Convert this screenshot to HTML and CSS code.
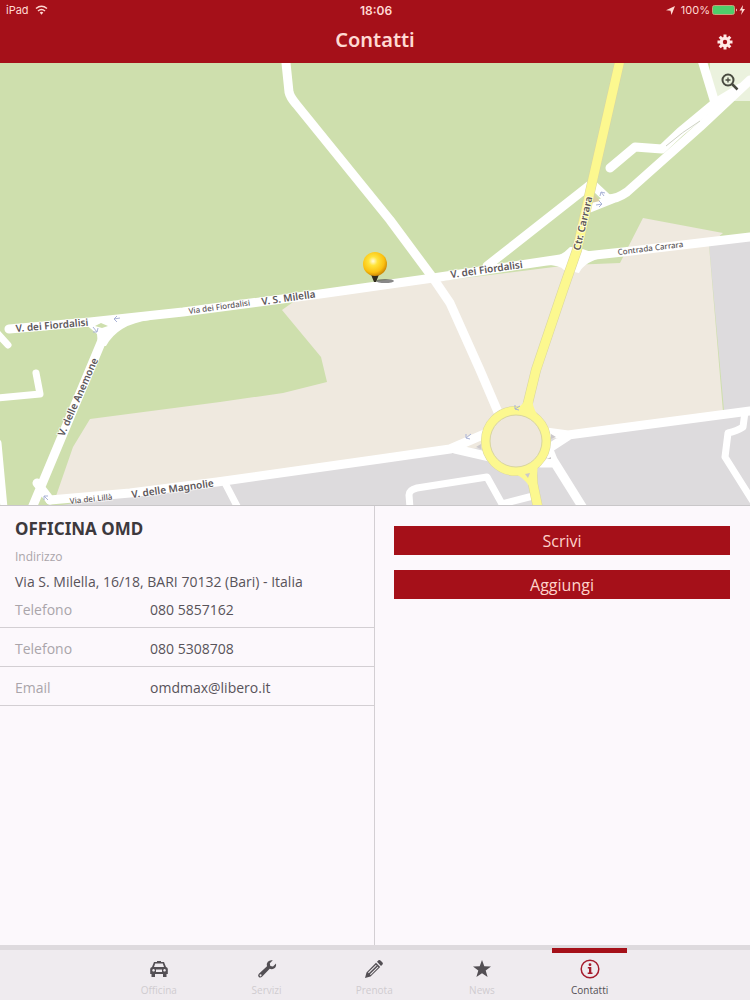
FILE: index.html
```html
<!DOCTYPE html>
<html lang="it">
<head>
  <meta charset="UTF-8" />
  <meta name="viewport" content="width=device-width, initial-scale=1.0"/>
  <title>Contatti</title>
  <link rel="stylesheet" href="styles.css">
</head>
<body>

  <header>
    <div class="stato">
      <div class="stato-sinistra">
        <span>iPad</span>
        <svg width="13" height="10" viewBox="0 0 13 10" fill="none" stroke="#ffd9d3" stroke-width="1.5">
          <path d="M1 3.5Q6.500-1 12 3.500M3 6Q6.500 3 10 6"/>
          <path d="M4.700 7.500L6.500 9.700L8.300 7.500Q6.500 6.200 4.700 7.500Z" fill="#ffd9d3" stroke="none"/>
        </svg>
      </div>
      <time class="ora">18:06</time>
      <div class="stato-destra">
        <svg width="9" height="9" viewBox="0 0 9 9"><path d="M9 0L5.500 9L4.500 4.800L0 4.200Z" fill="#ffd9d3"/></svg>
        <span class="carica">100%</span>
        <svg width="34" height="10" viewBox="0 0 34 10">
          <rect x="0.500" y="0.500" width="22" height="9" rx="2" fill="#4fce6b" stroke="#c9a07a"/>
          <path d="M24 3.500Q26 5 24 6.500Z" fill="#ffd9d3"/>
          <path d="M31 0L27.500 5.500H30L29 10L33 4H30.500Z" fill="#ffd9d3"/>
        </svg>
      </div>
    </div>
    <div class="titolo">
      <h1>Contatti</h1>
      <button class="impostazioni" aria-label="Impostazioni">
        <svg width="16" height="16" viewBox="-8 -8 16 16">
          <g stroke="#ffe9e6" stroke-width="3">
            <path d="M0-7.500V7.500M-7.500 0H7.500M-5.300-5.300L5.300 5.300M-5.300 5.300L5.300-5.300"/>
          </g>
          <circle r="5.200" fill="#ffe9e6"/>
          <circle r="2.200" fill="#a51019"/>
        </svg>
      </button>
    </div>
  </header>

  <div class="mappa">
    <svg class="carta" viewBox="0 63 750 442" role="img" aria-label="Mappa">
      <defs>
        <radialGradient id="giallo" cx="42%" cy="38%" r="62%">
          <stop offset="0" stop-color="#fffbe0"/>
          <stop offset="0.3" stop-color="#ffe43c"/>
          <stop offset="0.75" stop-color="#fbc010"/>
          <stop offset="1" stop-color="#cf8a05"/>
        </radialGradient>
      </defs>

      <!-- terreni -->
      <rect y="63" width="750" height="443" fill="#cedfad"/>
      <path d="M709 245L750 238V506H55L200 485L724 410Z" fill="#dddbdd"/>
      <path d="M282 310L300 297L440 281L570 265L620 263L643 218L723 233L709 245L723 412L565 437L447 452L200 486L55 499L73 447L90 419L220 402L283 393L327 382L321 357Z" fill="#efe9df"/>

      <!-- strade -->
      <g class="strade">
        <path d="M9 329L90 322L183 312L320 294L433 278L567 258L623 252L750 237"/>
        <path d="M286 63L289 92Q290 97 296 104L390 220L433 278L450 303L480 370L498 412"/>
        <path d="M487 266L590 185"/>
        <path d="M592 184L608 199Q617 199 627 192L700 127L750 80"/>
        <path d="M587 209L612 199"/>
        <path d="M610 168L635 147L662 149L680 132L715 103L702 60"/>
        <path d="M715 103L740 88"/>
        <path d="M50 500L130 493L217 482L380 459L450 449L487 433M455 449L490 457"/>
        <path d="M546 432L568 435L750 411M568 436L548 449"/>
        <path d="M545 440L553 460L583 508M541 463L553 463"/>
        <path d="M103 338L32 508M37 483L50 500"/>
      </g>
      <g class="strade vicoli">
        <path d="M410 508L409 495Q409 490 417 488L487 477L502 504L533 496"/>
        <path d="M745 412L743 427Q737 431 728 433L725 457L752 500"/>
        <path d="M-3 333L8 345"/>
        <path d="M-3 398L40 394L36 373"/>
        <path d="M-2 443L4 508"/>
        <path d="M225 483L238 508"/>
      </g>
      <path d="M84 323L97 334L98 346L106 346Q118 324 150 320V315Z" fill="#fff"/>
      <path d="M95 326L101 323L108 326L102 328Z" fill="#cedfad"/>
      <path d="M545 261Q562 256 570 247L579 247Q586 252 605 254V257Q585 261 579 273L564 270Q560 265 545 265Z" fill="#fff"/>
      <path d="M594 194L600 201L591 203Z" fill="#d9cfa4"/>
      <path d="M666 146Q682 132 700 121" fill="none" stroke="#ced2c4"/>

      <!-- strada provinciale e rotatoria -->
      <g class="bordo">
        <path d="M620 60L592 183L577 250L563 290L536 370L527 407"/>
        <circle cx="516" cy="441" r="30"/>
        <path d="M532 467L533 484L538 508"/>
      </g>
      <g class="provinciale">
        <path d="M620 60L592 183L577 250L563 290L536 370L527 407"/>
        <circle cx="516" cy="441" r="30"/>
        <path d="M532 467L533 484L538 508"/>
        <path d="M525 400Q522 407 512 410L541 420Q534 412 532 400ZM500 467Q522 474 530 487L536 487L538 462Z" fill="#fcf88f" stroke="none"/>
      </g>
      <circle cx="516" cy="441" r="26" fill="#eee7dc" stroke="#d8d5a0"/>
      <path d="M525 474L530 473L528 478ZM551 434L556 437L551 439ZM476 447L481 444V449ZM547 459L551 457V459Z" fill="#cbc8cb"/>

      <!-- sensi unici -->
      <g class="frecce">
        <path d="M120 318L114 319M117 316L114 319L117 322"/>
        <path d="M93 327L97 332M98 328L97 332L93 332"/>
        <path d="M48 500L44 496M48 496L44 496L44 500"/>
        <path d="M604 196L601 192M600 196L601 192L605 193"/>
        <path d="M596 205L602 204M599 201L602 204L599 207"/>
        <path d="M471 434L466 438M466 434L466 438L470 439"/>
        <path d="M520 406L515 409M515 405L515 409L519 410"/>
      </g>

      <!-- nomi delle vie -->
      <g class="vie">
        <text transform="translate(16 332) rotate(-5)">V. dei Fiordalisi</text>
        <text transform="translate(262 305) rotate(-8)">V. S. Milella</text>
        <text transform="translate(451 278) rotate(-8)">V. dei Fiordalisi</text>
        <text transform="translate(132 498) rotate(-8)">V. delle Magnolie</text>
        <text transform="translate(64 437) rotate(-66)">V. delle Anemone</text>
        <text transform="translate(580 251) rotate(-77)">Ctr. Carrara</text>
      </g>
      <g class="vie minori">
        <text transform="translate(189 314) rotate(-8)">Via dei Fiordalisi</text>
        <text transform="translate(618 255) rotate(-7)">Contrada Carrara</text>
        <text transform="translate(70 504) rotate(-6)">Via dei Lillà</text>
      </g>

      <!-- segnaposto -->
      <ellipse cx="385" cy="281" rx="9" ry="2" fill="#555" opacity="0.7"/>
      <path d="M370 272H380L376 282H374Z" fill="#2f2a1c"/>
      <circle cx="375" cy="264" r="12" fill="url(#giallo)"/>
    </svg>
    <button class="ingrandisci" aria-label="Ingrandisci">
      <svg width="18" height="18" viewBox="0 0 18 18" fill="none" stroke="#484a40">
        <circle cx="7" cy="7" r="5.500" stroke-width="2"/>
        <path d="M11 11L16.500 16.500" stroke-width="2.500"/>
        <path d="M4.500 7H9.500M7 4.500V9.500" stroke-width="1.300"/>
      </svg>
    </button>
  </div>

  <main>
    <section class="dati">
      <h2>OFFICINA OMD</h2>
      <p class="etichetta">Indirizzo</p>
      <p class="indirizzo">Via S. Milella, 16/18, BARI 70132 (Bari) - Italia</p>
      <table>
        <tr><th scope="row">Telefono</th><td>080 5857162</td></tr>
        <tr><th scope="row">Telefono</th><td>080 5308708</td></tr>
        <tr><th scope="row">Email</th><td>omdmax@libero.it</td></tr>
      </table>
    </section>
    <section class="azioni">
      <button>Scrivi</button>
      <button>Aggiungi</button>
    </section>
  </main>

  <nav>
    <a href="#officina">
      <svg width="20" height="20" viewBox="0 0 20 20">
        <path fill-rule="evenodd" d="M5 3H15L17 8Q18.800 8.500 18.800 10V15H17.500V18H14V15H6V18H2.500V15H1.200V10Q1.200 8.500 3 8ZM6.200 4.500L5 8H15L13.800 4.500ZM4.500 10A1.300 1.300 0 1 0 4.600 10ZM15.500 10A1.300 1.300 0 1 0 15.600 10ZM7 10.500V13H13V10.500Z"/>
        <path d="M8 2H12V4H8Z"/>
      </svg>
      <span>Officina</span>
    </a>
    <a href="#servizi">
      <svg width="20" height="20" viewBox="0 0 20 20">
        <path fill-rule="evenodd" d="M15.800 1.300L12.800 4.300L13.300 7L16 7.400L19 4.500Q19.600 8 17 9.500Q15 10.600 12.700 9.800L5 17.800Q3.300 19.300 1.700 17.900Q0.400 16.300 1.900 14.700L10 7.300Q9.200 4.800 10.800 2.800Q12.800 0.600 15.800 1.300ZM3.500 15.300A1 1 0 1 0 3.600 15.300Z"/>
      </svg>
      <span>Servizi</span>
    </a>
    <a href="#prenota">
      <svg width="20" height="20" viewBox="0 0 20 20">
        <path fill-rule="evenodd" d="M13 2.800L14.500 1.300Q15.500 0.500 16.500 1.500L18.500 3.500Q19.400 4.500 18.500 5.500L17 7ZM12 3.800L16.200 8L6.500 17.500L1 19L2.500 13.500ZM12 5.800L4 13.600L4.800 14.200L12.700 6.500ZM13.800 7.600L5.900 15.300L6.700 16L14.400 8.300Z"/>
      </svg>
      <span>Prenota</span>
    </a>
    <a href="#news">
      <svg width="20" height="20" viewBox="0 0 20 20">
        <path d="M10 1L12.300 7.300L19 7.500L13.700 11.600L15.600 18L10 14.200L4.400 18L6.300 11.600L1 7.500L7.700 7.300Z"/>
      </svg>
      <span>News</span>
    </a>
    <a href="#contatti" class="attivo">
      <svg width="20" height="20" viewBox="0 0 20 20">
        <circle cx="10" cy="10" r="8.800" fill="none" stroke="#a51c2d" stroke-width="1.500"/>
        <circle cx="10" cy="5.700" r="1.400"/>
        <path d="M7.800 8H11.300V13.500H12.500V15H7.700V13.500H9V9.400H7.800Z"/>
      </svg>
      <span>Contatti</span>
    </a>
  </nav>

</body>
</html>
```
FILE: styles.css
```css
* {
  box-sizing: border-box;
}

body {
  margin: 0;
  min-height: 100vh;
  display: flex;
  flex-direction: column;
  font-family: 'Open Sans', 'Noto Sans', sans-serif;
  font-size: 14px;
  background: #fcf8fc;
  color: #58535a;
}

button {
  font-family: inherit;
  border: none;
  padding: 0;
  cursor: pointer;
}

svg {
  display: block;
}

header {
  background: #a51019;
  color: #ffd9d3;
}

.stato {
  display: grid;
  grid-template-columns: 1fr auto 1fr;
  align-items: center;
  height: 20px;
  padding: 0 4px 0 6px;
  font-family: Inter, 'Liberation Sans', sans-serif;
  font-size: 11px;
}

.stato-sinistra,
.stato-destra {
  display: flex;
  align-items: center;
  gap: 6px;
}

.stato-destra {
  justify-content: flex-end;
}

.carica {
  margin-right: -4px;
}

.ora {
  font-size: 12px;
  font-weight: 600;
}

.titolo {
  display: grid;
  grid-template-columns: 1fr auto 1fr;
  align-items: center;
  height: 43px;
  padding: 0 17px;
}

h1,
h2,
.vie {
  font-family: 'Noto Sans', 'Open Sans', sans-serif;
}

h1 {
  grid-column: 2;
  margin: 0;
  padding-bottom: 4px;
  font-size: 20px;
  line-height: 36px;
  font-weight: 600;
}

.impostazioni {
  justify-self: end;
  background: none;
}

.mappa {
  position: relative;
  border-bottom: 1px solid #c9c7c9;
}

.carta {
  width: 100%;
  height: auto;
}

.strade path {
  fill: none;
  stroke: #fff;
  stroke-width: 9;
  stroke-linecap: round;
  stroke-linejoin: round;
}

.vicoli path {
  stroke-width: 7;
}

.bordo {
  fill: none;
  stroke: #d8d5a0;
  stroke-width: 10;
}

.provinciale {
  fill: none;
  stroke: #fcf88f;
  stroke-width: 9;
}

.frecce {
  fill: none;
  stroke: #a9b2d6;
}

.vie {
  font-size: 10px;
  font-weight: 600;
  fill: #5c5659;
  stroke: #fff;
  stroke-opacity: 0.6;
  stroke-width: 2;
  paint-order: stroke;
}

.minori {
  font-size: 8px;
  font-weight: 500;
}

.ingrandisci {
  position: absolute;
  top: 0;
  right: 0;
  width: 40px;
  height: 38px;
  display: flex;
  align-items: center;
  justify-content: center;
  background: rgba(255, 255, 255, 0.6);
}

main {
  flex: 1;
  display: grid;
  grid-template-columns: 1fr 1fr;
}

.dati {
  border-right: 1px solid #d3cfd3;
}

h2 {
  margin: 10px 15px 0;
  font-size: 17px;
  line-height: 26px;
  color: #3d393d;
}

.etichetta {
  margin: 6px 15px 0;
  font-size: 12px;
  line-height: 18px;
  color: #aaa5aa;
}

.indirizzo {
  margin: 6px 15px 0;
  line-height: 20px;
}

table {
  width: 100%;
  border-collapse: collapse;
}

th,
td {
  height: 39px;
  padding: 3px 0 0;
  text-align: left;
  border-bottom: 1px solid #d3cfd3;
}

tr:first-child th,
tr:first-child td {
  height: 35px;
  padding-top: 0;
}

tr th:first-child {
  width: 150px;
  padding-left: 15px;
  font-weight: normal;
  color: #aaa5aa;
}

.azioni {
  display: flex;
  flex-direction: column;
  gap: 15px;
  padding: 20px 20px 20px 19px;
}

.azioni button {
  height: 29px;
  background: #a51019;
  color: #ffd3cb;
  font-size: 16px;
}

nav {
  display: grid;
  grid-template-columns: repeat(5, 1fr);
  height: 55px;
  padding: 0 14.2% 0 14%;
  background: #efebef;
  border-top: 5px solid #dedade;
}

nav a {
  position: relative;
  display: flex;
  flex-direction: column;
  align-items: center;
  gap: 4px;
  padding-top: 9px;
  font-size: 10px;
  line-height: 14px;
  color: #cfcbcf;
  text-decoration: none;
}

nav svg {
  fill: #534f54;
}

nav .attivo {
  color: #534f54;
}

.attivo svg {
  fill: #a51c2d;
}

.attivo::before {
  content: '';
  position: absolute;
  top: -2px;
  width: 70%;
  height: 5px;
  background: #a51019;
}
```
